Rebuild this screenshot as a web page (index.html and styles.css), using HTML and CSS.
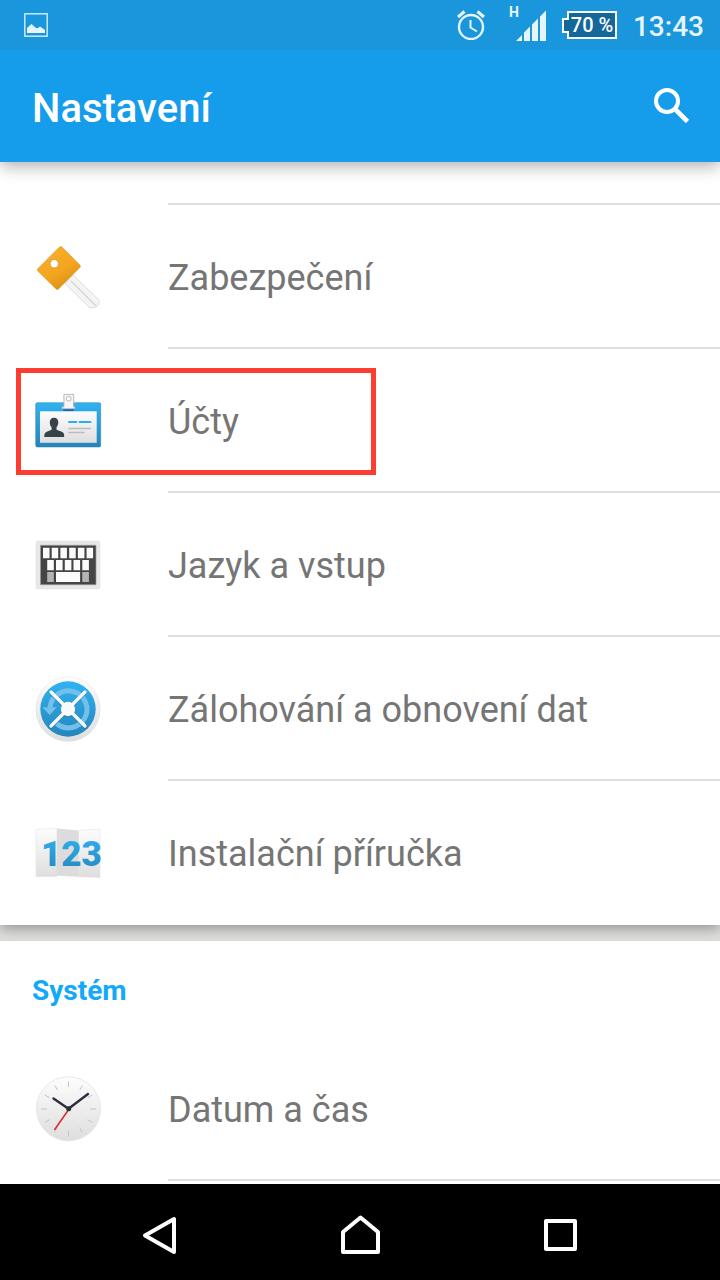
FILE: index.html
```html
<!DOCTYPE html>
<html lang="cs">
<head>
<meta charset="utf-8">
<meta name="viewport" content="width=device-width, initial-scale=1">
<title>Nastavení</title>
<link rel="stylesheet" href="styles.css">
</head>
<body>
<header class="top">
  <div class="status">
    <svg class="status-note" width="24" height="24" viewBox="0 0 24 24" aria-hidden="true">
      <rect x="0.8" y="0.8" width="22.4" height="22.4" fill="none" stroke="#cde8f8" stroke-width="1.500"/>
      <path d="M3 20v-5l4.500-4 4.500 4h2l2-1.500 5 3.500v3z" fill="#e6f4fc"/>
    </svg>
    <svg width="28" height="30" viewBox="0 0 28 30" aria-hidden="true" fill="none" stroke="#e6f4fc">
      <circle cx="14" cy="17" r="12" stroke-width="2.400"/>
      <path d="M13.500 10v7.500l6.500 4" stroke-width="2"/>
      <path d="M1 7l6.500-5.500M27 7l-6.500-5.500" stroke-width="3"/>
    </svg>
    <svg class="signal" width="37" height="44" viewBox="0 -4 37 44" aria-hidden="true" fill="#e6f4fc">
      <text class="signal-type" x="0" y="11">H</text>
      <path d="M7 35l6-6v6zM15 35V26.500l6-6V35zM23 35V18.500l6-6V35zM31 35V10.500l6-6V35z"/>
    </svg>
    <svg width="55" height="28" viewBox="0 0 55 28" role="img" aria-label="Baterie 70 %">
      <path d="M6 1h48v26H6v-6H1V8h5z" fill="#14679a" stroke="#fff" stroke-width="2"/>
      <text class="battery-text" x="30" y="21" text-anchor="middle">70 %</text>
    </svg>
    <time class="time">13:43</time>
  </div>
  <div class="appbar">
    <h1 class="title">Nastavení</h1>
    <button class="search" type="button" aria-label="Hledat">
      <svg width="48" height="48" viewBox="0 0 48 48" fill="none" stroke="#fff" stroke-width="4">
        <circle cx="19" cy="19" r="11"/>
        <path d="M28 28l11.500 11.500" stroke-width="4.600"/>
      </svg>
    </button>
  </div>
</header>

<main class="content">
  <section class="card card-first">
    <div class="cut"></div>
    <a class="row" href="#security">
      <svg class="icon" viewBox="0 0 72 72" aria-hidden="true">
        <defs><linearGradient id="gold" x1="0" y1="0" x2="0.600" y2="1"><stop offset="0" stop-color="#fbb029"/><stop offset=".65" stop-color="#f3a51f"/><stop offset="1" stop-color="#dc8e14"/></linearGradient></defs>
        <path d="M40.700 34.700L67 60v4l-3.500 3.700h-6L32.500 43z" fill="#f4f4f4" stroke="#dedede"/>
        <path d="M39 41l25 25" stroke="#d6d6d6" stroke-width="1.600"/>
        <path d="M27.500 7q1.200-1.200 2.400 0l18 18q1 1.200 0 2.400L26.500 49q-1.200 1.200-2.400 0L5.800 31q-1-1.200 0-2.300z" fill="url(#gold)" stroke="#d39a32" stroke-width=".6"/>
        <circle cx="22.300" cy="23.700" r="4.200" fill="#fff" stroke="#d08b1e" stroke-width=".7"/>
      </svg>
      <span class="label">Zabezpečení</span>
    </a>
    <a class="row marked" href="#accounts">
      <svg class="icon" viewBox="0 0 72 72" aria-hidden="true">
        <defs>
          <linearGradient id="blue" x1="0" y1="0" x2="0" y2="1"><stop offset="0" stop-color="#31b2f2"/><stop offset="1" stop-color="#2585ba"/></linearGradient>
          <linearGradient id="paper" x1="0" y1="0" x2="0" y2="1"><stop offset="0" stop-color="#fdfdfd"/><stop offset="1" stop-color="#dedede"/></linearGradient>
        </defs>
        <rect x="3.700" y="18.700" width="65" height="44.300" rx="1.500" fill="url(#blue)" stroke="#277fae" stroke-width=".5"/>
        <path d="M31 25h11v1.500q-5 2-11 0z" fill="#1565a8"/>
        <rect x="8" y="27.300" width="56.700" height="31.500" fill="url(#paper)"/>
        <path d="M22 33.700c3 0 4.500 2 4.300 5-.2 2-1 3.800-1.800 4.600v2.200c1 1 6 2 7 3.500.6 1 .7 2.500.7 4H12.300c0-1.500 0-3 .8-4 1.200-1.500 5.500-2.500 6.500-3.500v-2.200c-1-1-1.700-2.600-1.800-4.600-.2-3 1.300-5 4.200-5z" fill="#37434a"/>
        <path d="M37 38h7.300M47.500 38H58.500" stroke="#2baeee" stroke-width="2" stroke-linecap="round"/>
        <path d="M37 44.400h21.500M37 48.600h15" stroke="#bcbcbc" stroke-width="1.500" stroke-linecap="round"/>
        <path d="M31.900 10.400h9.800v12.400h1.300v2H30v-2h1.900z" fill="#f6f6f6" stroke="#a9a9a9" stroke-width=".8"/>
        <circle cx="36.700" cy="14.700" r="2.400" fill="#fff" stroke="#999" stroke-width=".7"/>
      </svg>
      <span class="label">Účty</span>
    </a>
    <a class="row" href="#language">
      <svg class="icon" viewBox="0 0 72 72" aria-hidden="true">
        <rect x="4" y="13" width="64" height="48" rx="2" fill="#e8e8e8" stroke="#dcdcdc" stroke-width=".5"/>
        <path d="M8.500 17.300H64v39.400H8.500z" fill="#454545" stroke="#999" stroke-width=".7"/>
        <g fill="#fbfbfb">
          <path d="M11 19.700h6.500v10.500H11zM19.700 19.700h6.500v10.500h-6.500zM28.400 19.700h6.500v10.500h-6.500zM37.200 19.700h6.500v10.500h-6.500zM45.900 19.700h6.500v10.500h-6.500zM54.600 19.700h6.500v10.500h-6.500z"/>
          <path d="M15.200 31.900h6.600v10.400h-6.600zM24 31.900h6.600v10.400H24zM32.800 31.900h6.600v10.400h-6.600zM41.500 31.900h6.600v10.400h-6.600zM50.300 31.900h6.600v10.400h-6.600z"/>
          <path d="M24 44h24.100v10H24z"/>
        </g>
        <path d="M15.200 44h6.600v10h-6.600zM50.300 44h6.600v10h-6.600z" fill="#b4b4b4"/>
      </svg>
      <span class="label">Jazyk a vstup</span>
    </a>
    <a class="row" href="#backup">
      <svg class="icon" viewBox="0 0 72 72" aria-hidden="true">
        <circle cx="36" cy="37.500" r="32.300" fill="#dadada"/>
        <circle cx="36" cy="36.800" r="32" fill="url(#paper)" stroke="#e6e6e6" stroke-width=".5"/>
        <circle cx="36" cy="37" r="27.700" fill="url(#blue)"/>
        <path d="M18 36a18.500 18.500 0 1 1 6.500 15.500" fill="none" stroke="#73c0ea" stroke-width="5"/>
        <path d="M10.500 35.300h14.300L17.700 43z" fill="#73c0ea"/>
        <path d="M19 21l34 34M53 21L19 55" stroke="#1f78ab" stroke-width="3.500" stroke-linecap="round" opacity=".6"/>
        <circle cx="36" cy="38" r="7.500" fill="#1f78ab" opacity=".5"/>
        <path d="M19 20l34 34M53 20L19 54" stroke="#fafafa" stroke-width="3.200" stroke-linecap="round"/>
        <circle cx="36" cy="37" r="7.200" fill="#fafafa"/>
      </svg>
      <span class="label">Zálohování a obnovení dat</span>
    </a>
    <a class="row row-last" href="#guide">
      <svg class="icon" viewBox="0 0 72 72" aria-hidden="true">
        <path d="M4 13.300l21-.8v48l-21 .2zM46.500 14.500L68 13v48.500l-21.500-.8z" fill="url(#paper)" stroke="#e2e2e2" stroke-width=".6"/>
        <path d="M25 12.500l21.500 2v46.200l-21.500-1z" fill="#dcdcdc"/>
        <text class="digits" fill="url(#blue)" x="9" y="50">123</text>
      </svg>
      <span class="label">Instalační příručka</span>
    </a>
  </section>

  <section class="card">
    <h2 class="section-title">Systém</h2>
    <a class="row" href="#date">
      <svg class="icon" viewBox="0 0 72 72" aria-hidden="true">
        <circle cx="36.500" cy="36.800" r="32" fill="url(#paper)" stroke="#dedede" stroke-width=".7"/>
        <path d="M36.500 9.500v5.500M36.500 58.500v6M9 37h6M58 37h6M22.800 13.500l2.700 4.600M47.700 55.600l2.700 4.800M12.700 23l4.800 2.700M55.600 47.700l4.800 2.700M50.400 13.500l-2.700 4.600M12.700 50.500l4.800-2.800M60.400 23l-4.800 2.700M25.300 55.600l-2.700 4.800" stroke="#c4c4c4" stroke-width="1"/>
        <path d="M36.700 37.500l-14 20" stroke="#e0252c" stroke-width="1.500" stroke-linecap="round"/>
        <path d="M21.500 26.500l15 10.200L56 22" fill="none" stroke="#2b2e3c" stroke-width="2.400" stroke-linecap="round"/>
        <circle cx="36.700" cy="36.800" r="2.500" fill="#2b2e3c"/>
      </svg>
      <span class="label">Datum a čas</span>
    </a>
  </section>
</main>

<nav class="navbar" aria-label="Systémová navigace">
  <button class="nav-button" type="button" aria-label="Zpět"><svg class="nav-icon" viewBox="0 0 48 48"><path d="M9 27.500L38 11v33z"/></svg></button>
  <button class="nav-button" type="button" aria-label="Domů"><svg class="nav-icon" viewBox="0 0 48 48"><path d="M24.500 9.500L42 24v20H7V24z"/></svg></button>
  <button class="nav-button" type="button" aria-label="Poslední aplikace"><svg class="nav-icon" viewBox="0 0 48 48"><path d="M10 13h29v28H10z"/></svg></button>
</nav>
</body>
</html>
```
FILE: styles.css
```css
*,
*::after {
  box-sizing: border-box;
}

body {
  margin: 0;
  min-height: 100vh;
  display: flex;
  flex-direction: column;
  background: #fff;
  color: #757575;
  font-family: Roboto, "Noto Sans", sans-serif;
}

svg {
  display: block;
  flex: none;
}

button {
  padding: 0;
  border: 0;
  background: none;
}

.top {
  position: relative;
  z-index: 1;
  background: #159ceb;
  box-shadow: 0 4px 16px rgba(0, 0, 0, 0.32);
}

.status {
  display: flex;
  align-items: center;
  gap: 16px;
  height: 50px;
  padding: 0 16px 0 24px;
  background: #1a96dc;
}

.status-note {
  margin-right: auto;
}

.signal {
  margin: 0 0 2px 8px;
}

.signal-type {
  font-size: 14px;
  font-weight: 700;
}

.battery-text {
  fill: #fff;
  font-size: 20px;
  font-weight: 500;
}

.time {
  padding-top: 4px;
  color: #e6f4fc;
  font-size: 28px;
  font-weight: 500;
  line-height: 32px;
}

.appbar {
  display: flex;
  align-items: center;
  justify-content: space-between;
  height: 112px;
  padding: 0 24px 0 32px;
}

.title {
  margin: 6px 0 0;
  color: #fff;
  font-size: 40px;
  font-weight: 500;
  line-height: 48px;
}

.content {
  flex: 1;
  background: #dededc;
}

.card {
  background: #fff;
}

.card-first {
  margin-bottom: 16px;
  box-shadow: 0 4px 12px rgba(0, 0, 0, 0.32);
}

.card:last-child {
  position: relative;
  padding-bottom: 3px;
}

.cut {
  height: 43px;
  margin-left: 168px;
  border-bottom: 2px solid #dedede;
}

.row {
  position: relative;
  display: grid;
  grid-template-columns: 136px 1fr;
  height: 144px;
  padding-left: 32px;
  color: inherit;
  text-decoration: none;
}

.icon {
  align-self: center;
  width: 72px;
  height: 72px;
  margin-bottom: 2px;
}

.label {
  display: flex;
  align-items: center;
  border-bottom: 2px solid #dedede;
  padding-top: 4px;
  font-size: 36px;
  line-height: 44px;
}

.row-last .label {
  border-color: transparent;
}

.marked::after {
  content: "";
  position: absolute;
  top: 19px;
  left: 16px;
  width: 360px;
  height: 107px;
  border: 5px solid #fc3d32;
}

.digits {
  font-size: 35px;
  font-weight: 900;
}

.section-title {
  margin: 0;
  padding: 32px 32px 28px;
  color: #12a9fb;
  font-size: 28px;
  font-weight: 700;
  line-height: 36px;
}

.navbar {
  display: grid;
  grid-template-columns: repeat(3, 1fr);
  height: 96px;
  padding: 0 60px;
  background: #000;
}

.nav-button {
  display: flex;
  align-items: center;
  justify-content: center;
}

.nav-icon {
  width: 48px;
  height: 48px;
  fill: none;
  stroke: #fff;
  stroke-width: 4;
  stroke-linejoin: round;
}
```
